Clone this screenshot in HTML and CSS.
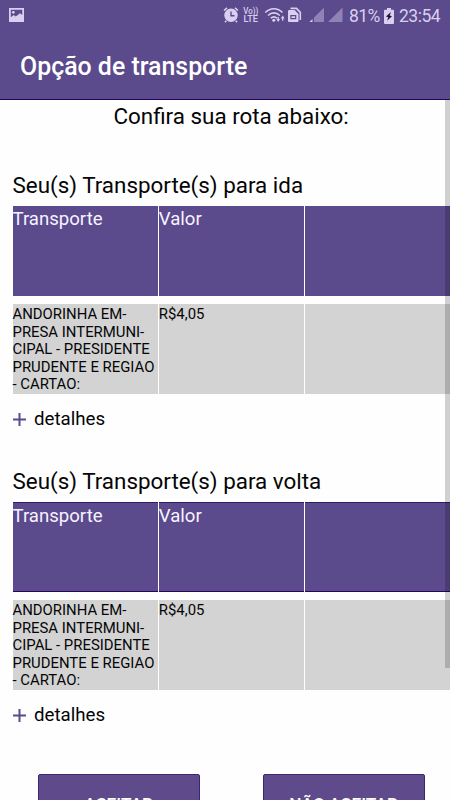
FILE: index.html
```html
<!DOCTYPE html>
<html lang="pt-BR">
<head>
<meta charset="utf-8">
<title>Opção de transporte</title>
<link rel="stylesheet" href="styles.css">
</head>
<body>
<header class="top">
  <div class="status">
    <svg class="picture" width="15" height="14" viewBox="0 0 15 14"><path fill-rule="evenodd" d="M0 0h15v14H0zM1.8 1.8v7.5L4.8 7l2 1.6L11 5.2l2.3 1.7V1.8z"/><circle cx="4.3" cy="4.3" r="1.4"/></svg>
    <svg class="indicators" width="122" height="18" viewBox="222 6 122 18">
      <path d="M224 10.500l3-2.600M235 7.900l3 2.600M226.300 20.700l-1.300 1.400M235.700 20.700l1.300 1.400" stroke="currentColor" stroke-width="1.600"/>
      <circle cx="231" cy="15.300" r="6.700"/>
      <path class="cut" d="M231 11.500v4.200h3.500"/>
      <text class="volte" x="243.300" y="14.300" textLength="15" lengthAdjust="spacingAndGlyphs">Vo))</text>
      <text class="volte" x="243.500" y="22.400" textLength="14.500" lengthAdjust="spacingAndGlyphs">LTE</text>
      <path class="line" d="M265.300 12.500c5-5 12.200-5 17.200 0M268 15.500c3.500-3.500 8.300-3.500 11.800 0M270.800 18.200c2-1.800 4.200-1.800 6.200 0"/>
      <circle cx="273.800" cy="20.300" r="1.500"/>
      <path d="M276.300 19h1.300v-2h1.200v2h1.300l-1.900 3zM280.800 18.500l1.900-3 1.900 3h-1.300v2.300h-1.200v-2.300z"/>
      <path class="line" d="M290.500 8.400h6l3.800 4V20"/>
      <path fill-rule="evenodd" d="M288 11q0-1 1-1h5.500l4 4v7q0 1-1 1H289q-1 0-1-1zM290.300 15v4.300h6V15zM291.500 16.200h3.600v1.800h-3.600z"/>
      <path d="M312.500 19v3h-3z"/>
      <path class="faint" d="M324 7.500V22h-10v-4.500zM342.500 7.500V22H328z"/>
    </svg>
    <span class="percent">81%</span>
    <svg class="battery" width="10" height="16" viewBox="0 0 10 16"><path d="M0 2.700q0-1 1-1h2V0h4v1.700h2q1 0 1 1V15q0 1-1 1H1q-1 0-1-1z"/><path class="bolt" d="M7 4L2 8.400l2.300.8L3 12.800l5-4.500-2.300-.8z"/></svg>
    <span class="clock">23:54</span>
  </div>
  <h1>Opção de transporte</h1>
</header>
<main>
  <p class="intro">Confira sua rota abaixo:</p>
  <section class="trip">
    <h2>Seu(s) Transporte(s) para ida</h2>
    <div class="row head"><div>Transporte</div><div>Valor</div><div></div></div>
    <div class="row data"><div>ANDORINHA EM-<br>PRESA INTERMUNI-<br>CIPAL - PRESIDENTE<br>PRUDENTE E REGIAO<br>- CARTAO:</div><div>R$4,05</div><div></div></div>
    <div class="details"><svg width="13" height="13" viewBox="0 0 13 13"><path d="M0 6.500h13M6.500 0v13"/></svg><span>detalhes</span></div>
  </section>
  <section class="trip">
    <h2>Seu(s) Transporte(s) para volta</h2>
    <div class="row head edged"><div>Transporte</div><div>Valor</div><div></div></div>
    <div class="row data"><div>ANDORINHA EM-<br>PRESA INTERMUNI-<br>CIPAL - PRESIDENTE<br>PRUDENTE E REGIAO<br>- CARTAO:</div><div>R$4,05</div><div></div></div>
    <div class="details"><svg width="13" height="13" viewBox="0 0 13 13"><path d="M0 6.500h13M6.500 0v13"/></svg><span>detalhes</span></div>
  </section>
  <div class="actions"><button>ACEITAR</button><button>NÃO ACEITAR</button></div>
  <div class="scrollbar"></div>
</main>
</body>
</html>
```

FILE: styles.css
```css
* { box-sizing: border-box; }
html, body { height: 100%; overflow: hidden; }
body { margin: 0; background: #fefefe; color: #050505; font-family: Roboto, "Liberation Sans", sans-serif; }
.top { height: 100px; background: #5b4a8c; border-bottom: 1px solid #25055a; color: #fff; }
.status { height: 32px; display: flex; align-items: flex-start; padding-left: 9px; color: #d9cff0; }
.status svg { fill: currentColor; flex: none; }
.picture { margin-top: 8px; }
.indicators { margin: 6px 0 0 198px; }
.status .line { fill: none; stroke: currentColor; stroke-width: 1.6; }
.status .cut { fill: none; stroke: #5b4a8c; stroke-width: 1.4; }
.volte { font-size: 9.2px; font-weight: 500; }
.faint { opacity: .42; }
.percent, .clock { font-size: 17.5px; line-height: 20px; margin-top: 6px; white-space: nowrap; }
.percent { width: 30px; margin-left: 5px; letter-spacing: -.6px; }
.battery { margin: 8px 0 0 5px; }
.battery .bolt { fill: #21113f; }
.clock { margin-left: 5px; letter-spacing: -.5px; }
h1 { margin: 19px 0 0 20px; font-size: 24.9px; line-height: 32px; font-weight: 500; }
main { position: relative; height: 700px; padding-left: 12.5px; overflow: hidden; }
.intro { margin: 0 0 42px; padding-left: 101px; font-size: 22.4px; line-height: 32px; height: 32px; }
.trip { height: 296.3px; }
h2 { margin: 0; height: 32px; font-size: 22.4px; line-height: 23px; font-weight: 400; }
.row { display: grid; grid-template-columns: repeat(3, 145px); column-gap: 1.3px; height: 90px; white-space: nowrap; }
.head > div { background: #5b4a8c; color: #f7f2ff; font-size: 18.6px; line-height: 27px; }
.edged > div { border-top: 1px solid #321b65; border-bottom: 1px solid #25055a; line-height: 26px; }
.data { margin-top: 8px; }
.data > div { background: #d3d3d3; padding-top: 2px; font-size: 14.9px; line-height: 17.5px; }
.details { display: flex; align-items: center; gap: 8.5px; height: 50px; font-size: 18.7px; }
.details svg { stroke: #5b4a8c; stroke-width: 2; }
.actions { display: flex; gap: 63px; padding: 7px 0 0 25px; }
button { width: 162px; height: 60px; padding: 0; border: 1px solid #3e2475; border-radius: 2px; background: #5f4a8b; color: #fff; font: 500 17.2px/20px Roboto, sans-serif; }
.scrollbar { position: absolute; top: 0; right: 0; width: 5px; height: 568px; background: rgba(0,0,0,.18); }
```
